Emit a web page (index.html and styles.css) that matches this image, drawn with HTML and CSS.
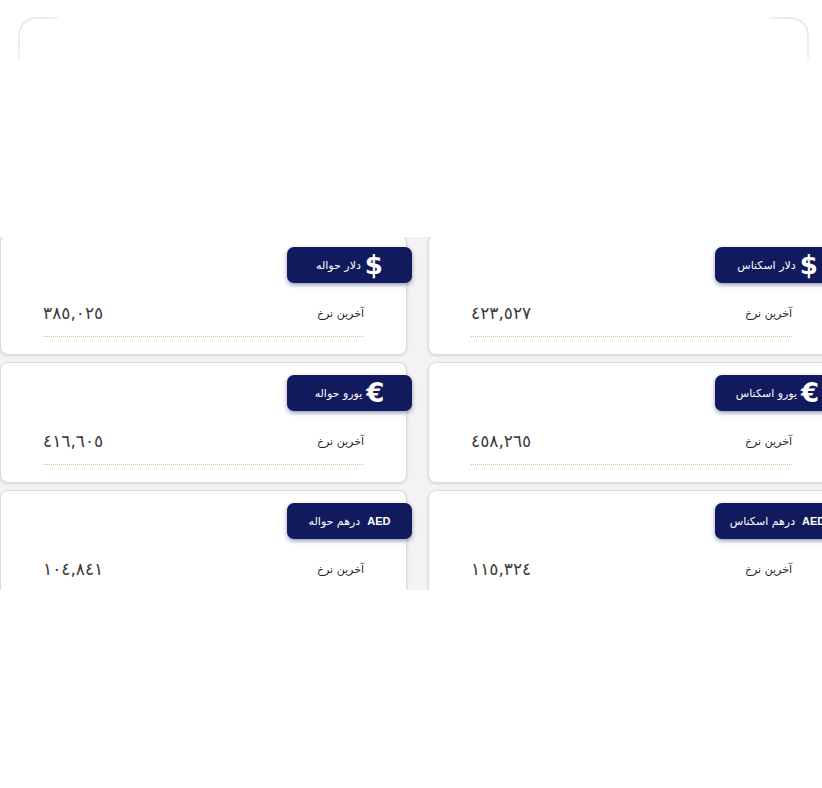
FILE: index.html
```html
<!DOCTYPE html>
<html lang="fa" dir="rtl">
<head>
    <meta charset="UTF-8">
    <meta name="viewport" content="width=device-width, initial-scale=1.0">
    <title>نرخ ارز</title>
    <link rel="stylesheet" href="styles.css">
</head>
<body>
    <div class="frame">
        <span class="corner corner-right"></span>
        <span class="corner corner-left"></span>
    </div>

    <div class="rates">
        <div class="rates-grid">
            <div class="card">
                <div class="badge">
                    <span class="badge-icon">$</span>
                    <span class="badge-title">دلار اسکناس</span>
                </div>
                <div class="rate-row">
                    <span class="rate-label">آخرین نرخ</span>
                    <span class="rate-value">٤٢٣,٥٢٧</span>
                </div>
                <div class="rate-line"></div>
            </div>
            <div class="card">
                <div class="badge">
                    <span class="badge-icon">$</span>
                    <span class="badge-title">دلار حواله</span>
                </div>
                <div class="rate-row">
                    <span class="rate-label">آخرین نرخ</span>
                    <span class="rate-value">٣٨٥,٠٢٥</span>
                </div>
                <div class="rate-line"></div>
            </div>

            <div class="card">
                <div class="badge">
                    <span class="badge-icon">€</span>
                    <span class="badge-title">یورو اسکناس</span>
                </div>
                <div class="rate-row">
                    <span class="rate-label">آخرین نرخ</span>
                    <span class="rate-value">٤٥٨,٢٦٥</span>
                </div>
                <div class="rate-line"></div>
            </div>
            <div class="card">
                <div class="badge">
                    <span class="badge-icon">€</span>
                    <span class="badge-title">یورو حواله</span>
                </div>
                <div class="rate-row">
                    <span class="rate-label">آخرین نرخ</span>
                    <span class="rate-value">٤١٦,٦٠٥</span>
                </div>
                <div class="rate-line"></div>
            </div>

            <div class="card">
                <div class="badge">
                    <span class="badge-code">AED</span>
                    <span class="badge-title">درهم اسکناس</span>
                </div>
                <div class="rate-row">
                    <span class="rate-label">آخرین نرخ</span>
                    <span class="rate-value">١١٥,٣٢٤</span>
                </div>
                <div class="rate-line"></div>
            </div>
            <div class="card">
                <div class="badge">
                    <span class="badge-code">AED</span>
                    <span class="badge-title">درهم حواله</span>
                </div>
                <div class="rate-row">
                    <span class="rate-label">آخرین نرخ</span>
                    <span class="rate-value">١٠٤,٨٤١</span>
                </div>
                <div class="rate-line"></div>
            </div>
        </div>
    </div>
</body>
</html>
```

FILE: styles.css
```css
* {
    margin: 0;
    padding: 0;
    box-sizing: border-box;
}

body {
    font-family: "DejaVu Sans", "Noto Sans", sans-serif;
    background: #fff;
    color: #222;
    height: 788px;
    overflow: hidden;
}

/* faint outline of the box above, only the corners show */
.frame {
    display: flex;
    justify-content: space-between;
    margin: 17px 13px 0 18px;
}

.corner {
    width: 40px;
    height: 42px;
    border-top: 2px solid #ebebeb;
}

.corner-right {
    border-right: 2px solid #ebebeb;
    border-top-right-radius: 18px;
    -webkit-mask-image: linear-gradient(to bottom left, #000 35%, transparent 75%);
    mask-image: linear-gradient(to bottom left, #000 35%, transparent 75%);
}

.corner-left {
    border-left: 2px solid #ebebeb;
    border-top-left-radius: 18px;
    -webkit-mask-image: linear-gradient(to bottom right, #000 35%, transparent 75%);
    mask-image: linear-gradient(to bottom right, #000 35%, transparent 75%);
}

.rates {
    margin-top: 178px;
    height: 353px;
    overflow: hidden;
    background: #f3f3f5;
}

.rates-grid {
    display: grid;
    grid-template-columns: 407px 407px;
    column-gap: 21px;
    row-gap: 7px;
    width: 835px;
    margin-right: -13px;
    margin-top: -3px;
}

.card {
    height: 121px;
    padding: 12px 42px 0;
    background: #fff;
    border: 1px solid #dcdcdf;
    border-radius: 8px;
    box-shadow: 0 1px 3px rgba(0, 0, 0, 0.12);
}

.badge {
    display: flex;
    align-items: center;
    justify-content: center;
    gap: 4px;
    width: 125px;
    height: 36px;
    margin-right: -48px;
    background: #111a5c;
    border-radius: 7px;
    box-shadow: 0 2px 4px rgba(17, 26, 92, 0.45);
    color: #fff;
}

.badge-icon {
    font-size: 26px;
    font-weight: bold;
    line-height: 1;
}

.badge-title {
    font-size: 11px;
}

.badge-code {
    font-size: 11px;
    font-weight: bold;
    font-family: "Liberation Sans", "DejaVu Sans", sans-serif;
    margin-left: 3px;
}

.rate-row {
    display: flex;
    justify-content: space-between;
    align-items: center;
    height: 20px;
    margin-top: 20px;
}

.rate-label {
    font-size: 11px;
    color: #1e1e1e;
}

.rate-value {
    font-size: 17px;
    color: #3a3a3a;
    letter-spacing: -0.4px;
    direction: ltr;
}

.rate-line {
    margin-top: 13px;
    border-bottom: 1px dotted #cfc38a;
}
```
